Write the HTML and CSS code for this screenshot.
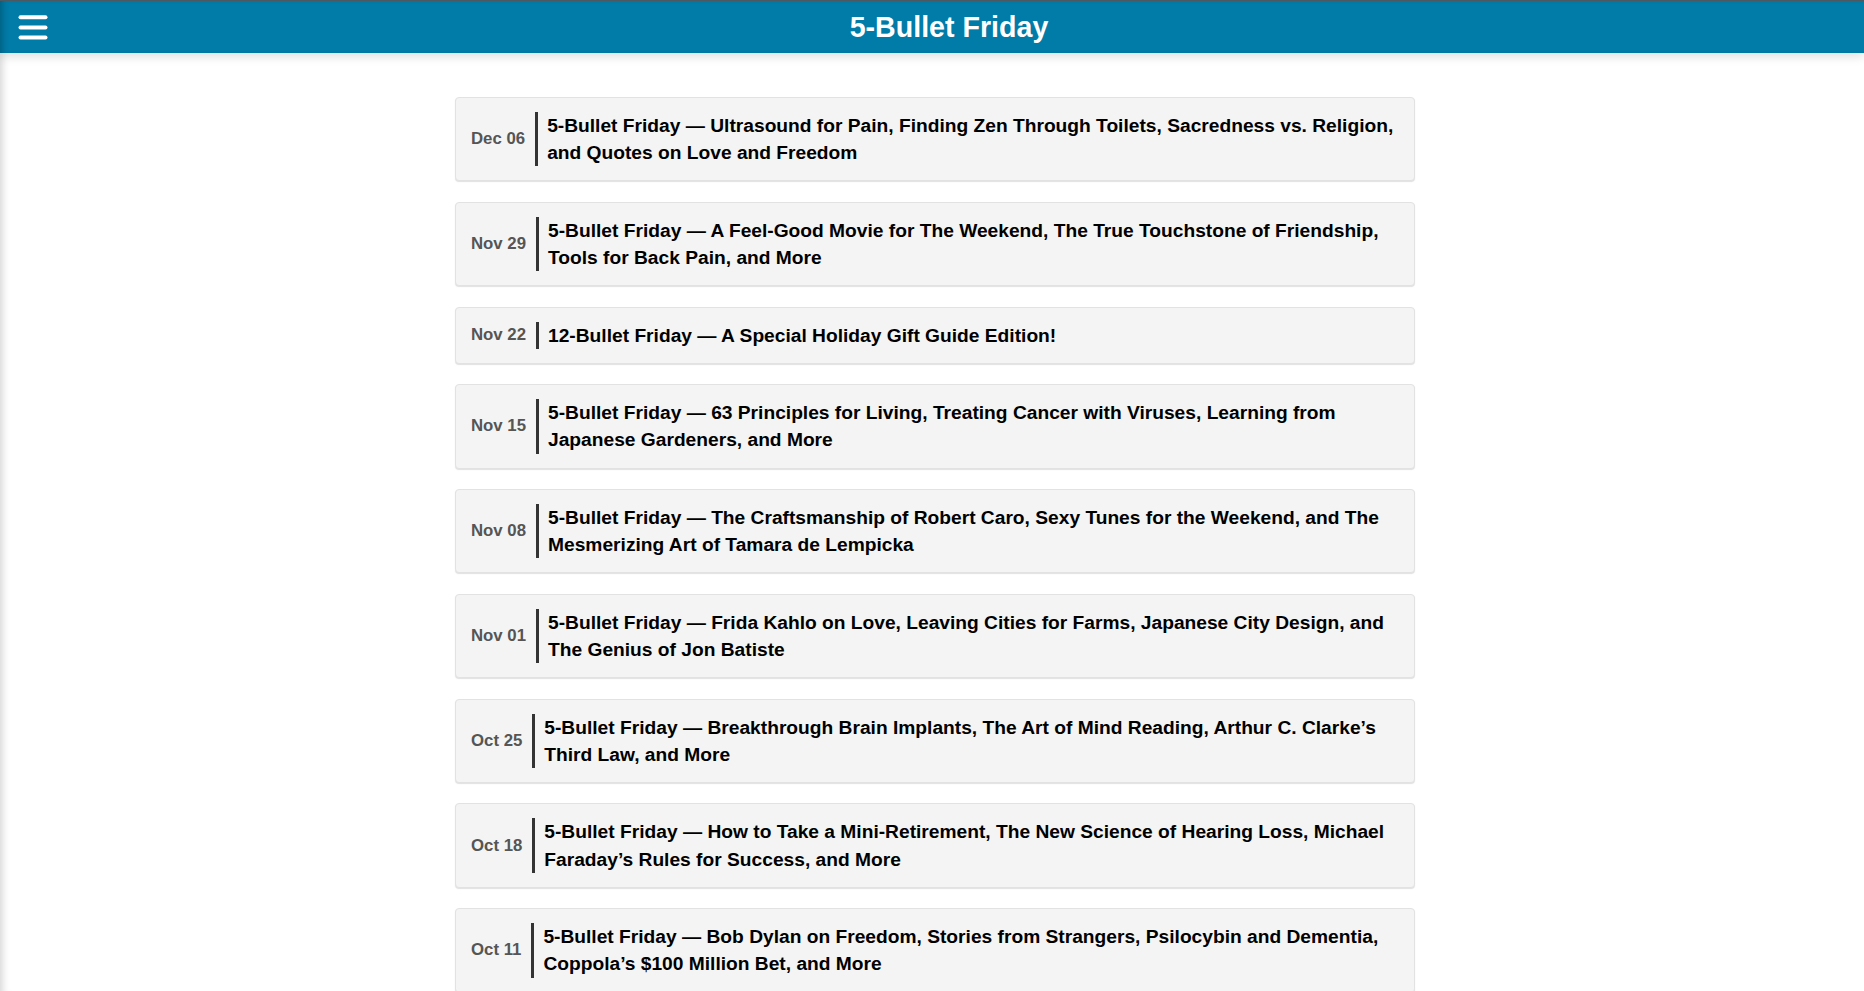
FILE: index.html
```html
<!DOCTYPE html>
<html lang="en">
<head>
<meta charset="utf-8">
<title>5-Bullet Friday</title>
<link rel="stylesheet" href="styles.css">
</head>
<body>
<div class="page">
  <header class="topbar">
    <button class="menu-btn" aria-label="Menu">
      <svg width="30" height="25" viewBox="0 0 30 25">
        <rect x="0.5" y="0.2" width="29" height="4" rx="2" fill="#fff"/>
        <rect x="0.5" y="10.4" width="29" height="4" rx="2" fill="#fff"/>
        <rect x="0.5" y="20.4" width="29" height="4" rx="2" fill="#fff"/>
      </svg>
    </button>
    <h1 class="topbar-title">5-Bullet Friday</h1>
  </header>
  <main class="list">
    <a class="post">
      <span class="post-date">Dec 06</span>
      <span class="post-title">5-Bullet Friday — Ultrasound for Pain, Finding Zen Through Toilets, Sacredness vs. Religion, and Quotes on Love and Freedom</span>
    </a>
    <a class="post">
      <span class="post-date">Nov 29</span>
      <span class="post-title">5-Bullet Friday — A Feel-Good Movie for The Weekend, The True Touchstone of Friendship, Tools for Back Pain, and More</span>
    </a>
    <a class="post">
      <span class="post-date">Nov 22</span>
      <span class="post-title">12-Bullet Friday — A Special Holiday Gift Guide Edition!</span>
    </a>
    <a class="post">
      <span class="post-date">Nov 15</span>
      <span class="post-title">5-Bullet Friday — 63 Principles for Living, Treating Cancer with Viruses, Learning from Japanese Gardeners, and More</span>
    </a>
    <a class="post">
      <span class="post-date">Nov 08</span>
      <span class="post-title">5-Bullet Friday — The Craftsmanship of Robert Caro, Sexy Tunes for the Weekend, and The Mesmerizing Art of Tamara de Lempicka</span>
    </a>
    <a class="post">
      <span class="post-date">Nov 01</span>
      <span class="post-title">5-Bullet Friday — Frida Kahlo on Love, Leaving Cities for Farms, Japanese City Design, and The Genius of Jon Batiste</span>
    </a>
    <a class="post">
      <span class="post-date">Oct 25</span>
      <span class="post-title">5-Bullet Friday — Breakthrough Brain Implants, The Art of Mind Reading, Arthur C. Clarke’s Third Law, and More</span>
    </a>
    <a class="post">
      <span class="post-date">Oct 18</span>
      <span class="post-title">5-Bullet Friday — How to Take a Mini-Retirement, The New Science of Hearing Loss, Michael Faraday’s Rules for Success, and More</span>
    </a>
    <a class="post">
      <span class="post-date">Oct 11</span>
      <span class="post-title">5-Bullet Friday — Bob Dylan on Freedom, Stories from Strangers, Psilocybin and Dementia, Coppola’s $100 Million Bet, and More</span>
    </a>
  </main>
</div>
</body>
</html>
```

FILE: styles.css
```css
* { box-sizing: border-box; }

html, body {
  margin: 0;
  padding: 0;
  height: 100%;
  overflow: hidden;
}

body {
  font-family: "Liberation Sans", Arial, sans-serif;
  background: #fff;
  color: #000;
}

.page {
  min-height: 100%;
  box-shadow: inset 8px 0 8px -6px rgba(0, 0, 0, 0.18);
}

.topbar {
  position: relative;
  z-index: 2;
  height: 53px;
  border-top: 1px solid #4b5962;
  background: #017ba7;
  box-shadow: 0 3px 10px rgba(0, 0, 0, 0.14), inset 6px 0 6px -4px rgba(0, 0, 0, 0.25);
  display: flex;
  align-items: center;
}

.menu-btn {
  position: absolute;
  left: 18px;
  top: 14px;
  width: 30px;
  height: 25px;
  padding: 0;
  border: 0;
  background: none;
  display: block;
}

.menu-btn svg { display: block; }

.topbar-title {
  flex: 1;
  margin: 0;
  padding-left: 34px;
  text-align: center;
  color: #fff;
  font-size: 28.6px;
  font-weight: bold;
  line-height: 52px;
}

.list {
  width: 960px;
  margin: 44px auto 0;
  padding: 0;
  position: relative;
  left: 3px;
  display: flex;
  flex-direction: column;
  gap: 20.4px;
}

.post {
  display: flex;
  align-items: center;
  padding: 14px 15px;
  background: #f4f4f4;
  border: 1px solid #e2e2e2;
  border-radius: 4px;
  box-shadow: 0 1px 1px rgba(0, 0, 0, 0.12);
  text-decoration: none;
}

.post-date {
  flex: none;
  padding-right: 10px;
  color: #555;
  font-size: 16.8px;
  font-weight: bold;
  white-space: nowrap;
}

.post-title {
  flex: 1;
  border-left: 3px solid #333;
  padding-left: 9px;
  color: #000;
  font-size: 19.2px;
  font-weight: bold;
  line-height: 27.2px;
}
```
